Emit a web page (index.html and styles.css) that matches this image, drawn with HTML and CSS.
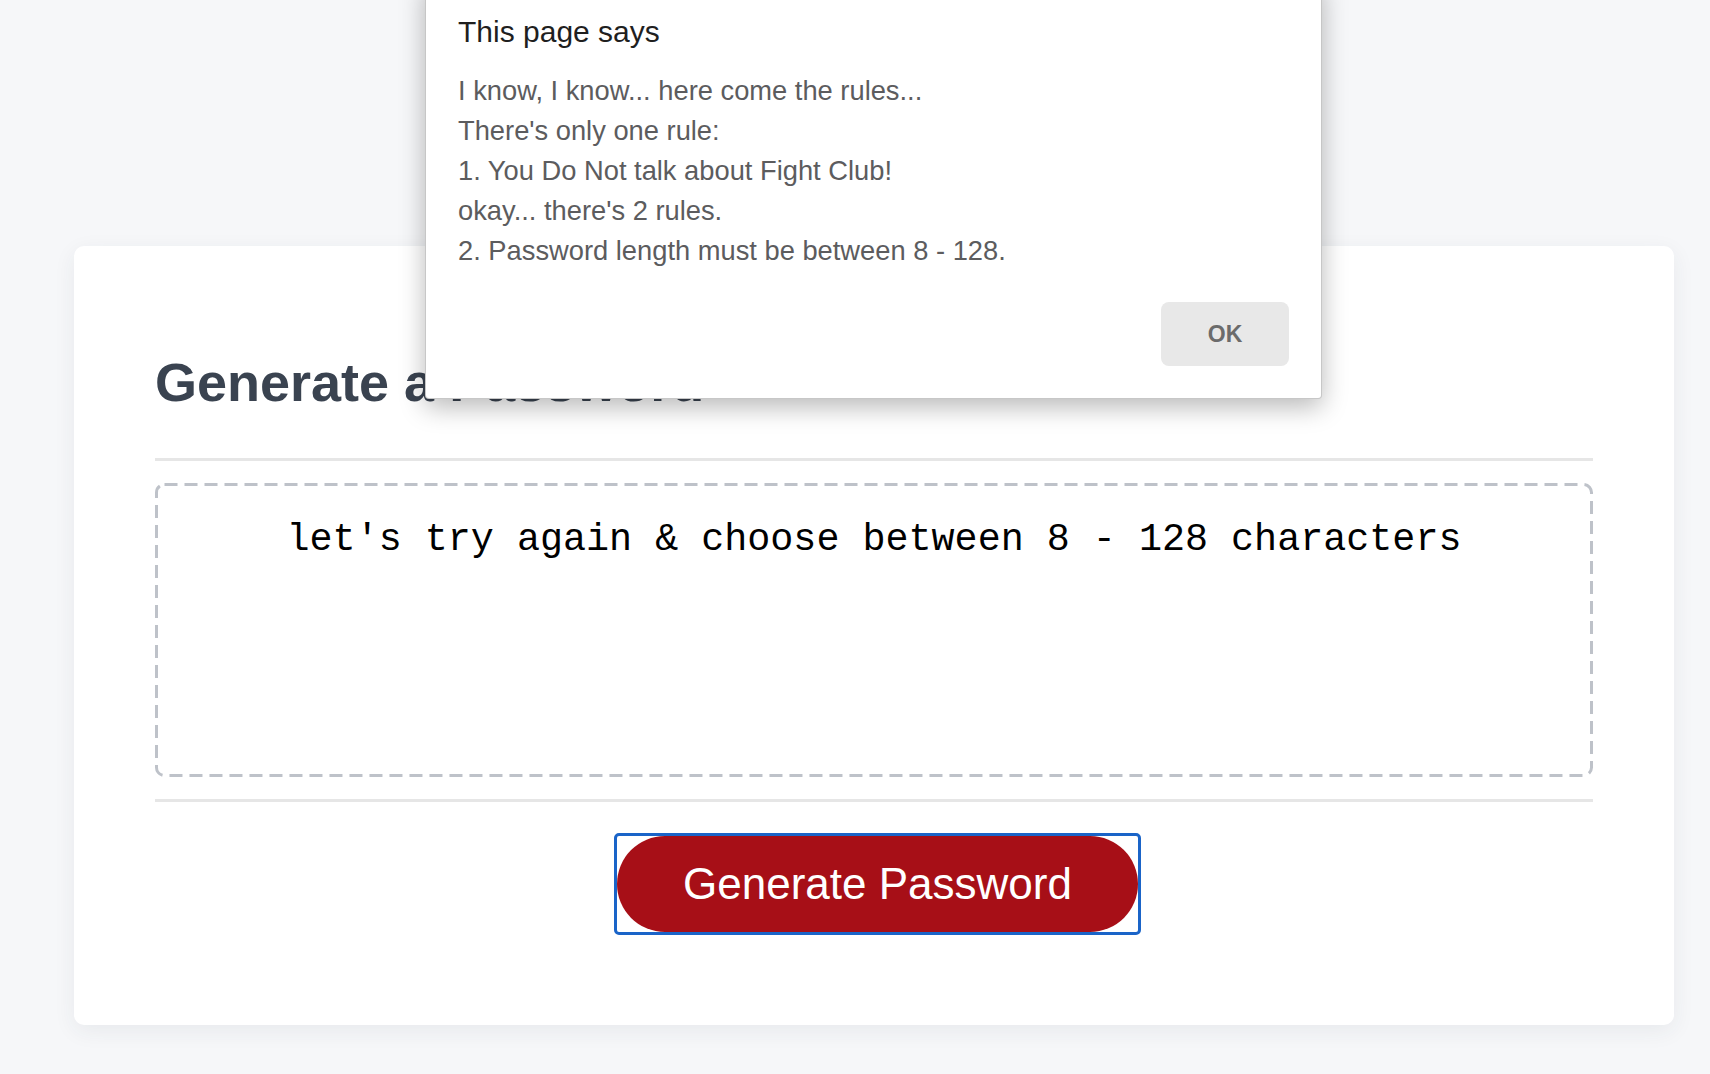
FILE: index.html
```html
<!DOCTYPE html>
<html lang="en">
<head>
<meta charset="utf-8">
<title>Password Generator</title>
<link rel="stylesheet" href="styles.css">
</head>
<body>
<main class="card">
  <h1 class="card-title">Generate a Password</h1>
  <hr class="rule">
  <div class="output-wrap">
    <textarea class="output" readonly>let's try again &amp; choose between 8 - 128 characters</textarea>
    <svg class="output-border" aria-hidden="true"><rect class="output-border-rect"/></svg>
  </div>
  <hr class="rule rule-bottom">
  <button class="generate" type="button"><span class="generate-pill">Generate Password</span></button>
</main>
<div class="dialog" role="alertdialog">
  <div class="dialog-title">This page says</div>
  <div class="dialog-body">
    <p class="dialog-line">I know, I know... here come the rules...</p>
    <p class="dialog-line">There's only one rule:</p>
    <p class="dialog-line">1. You Do Not talk about Fight Club!</p>
    <p class="dialog-line">okay... there's 2 rules.</p>
    <p class="dialog-line">2. Password length must be between 8 - 128.</p>
  </div>
  <div class="dialog-actions"><button class="dialog-ok" type="button">OK</button></div>
</div>
</body>
</html>
```

FILE: styles.css
```css
html, body {
  margin: 0;
  padding: 0;
}
body {
  background: #f6f7f9;
  font-family: "Liberation Sans", Arial, sans-serif;
  overflow: hidden;
  height: 1074px;
  position: relative;
}
.card {
  margin: 246px 0 0 74px;
  width: 1600px;
  height: 779px;
  box-sizing: border-box;
  padding: 103px 81px 90px;
  background: #fff;
  border-radius: 10px;
  box-shadow: 0 6px 22px rgba(40, 50, 70, 0.07);
  display: flex;
  flex-direction: column;
}
.card-title {
  margin: 0;
  font-size: 54px;
  line-height: 66px;
  font-weight: bold;
  color: #3a4350;
}
.rule {
  margin: 43px 0 0;
  height: 3px;
  border: none;
  background: #e6e6e6;
}
.output-wrap {
  position: relative;
  margin: 22px 0 0;
  height: 294px;
}
.output {
  display: block;
  width: 100%;
  height: 100%;
  box-sizing: border-box;
  padding: 36px 23px;
  border: none;
  border-radius: 8px;
  font-family: "Liberation Mono", "Courier New", monospace;
  font-size: 38.4px;
  line-height: 43px;
  color: #000;
  text-align: center;
  resize: none;
  overflow: hidden;
  background: #fff;
  outline: none;
}
.output-border {
  position: absolute;
  inset: 0;
  width: 100%;
  height: 100%;
  pointer-events: none;
  overflow: visible;
}
.output-border-rect {
  x: 1.5px;
  y: 1.5px;
  width: calc(100% - 3px);
  height: calc(100% - 3px);
  rx: 8px;
  ry: 8px;
  fill: none;
  stroke: #bec2c9;
  stroke-width: 3px;
  stroke-dasharray: 13 7;
}
.rule-bottom {
  margin-top: 22px;
}
.generate {
  display: block;
  margin: 31px 0 0 459px;
  width: 527px;
  height: 102px;
  box-sizing: border-box;
  padding: 0;
  border: 3px solid #1a64c8;
  border-radius: 5px;
  background: #fff;
  cursor: pointer;
}
.generate-pill {
  display: flex;
  align-items: center;
  justify-content: center;
  width: 100%;
  height: 100%;
  border-radius: 48px;
  background: #a70f17;
  color: #fff;
  font-family: "Liberation Sans", Arial, sans-serif;
  font-size: 44px;
}
.dialog {
  position: absolute;
  top: -20px;
  left: 425px;
  width: 897px;
  box-sizing: border-box;
  padding: 34px 32px 32px 32px;
  background: #fff;
  border: 1px solid rgba(0, 0, 0, 0.22);
  border-top: none;
  border-radius: 0 0 4px 4px;
  box-shadow: 0 8px 26px rgba(0, 0, 0, 0.28);
}
.dialog-title {
  font-size: 30px;
  line-height: 36px;
  color: #1f1f1f;
}
.dialog-body {
  margin-top: 21px;
}
.dialog-line {
  margin: 0;
  font-size: 27.3px;
  line-height: 40px;
  color: #5c5c5e;
}
.dialog-actions {
  margin-top: 31px;
  display: flex;
  justify-content: flex-end;
}
.dialog-ok {
  width: 128px;
  height: 64px;
  border: none;
  border-radius: 8px;
  background: #e8e8e8;
  color: #6b6b6b;
  font-family: "Liberation Sans", Arial, sans-serif;
  font-size: 23px;
  font-weight: bold;
  padding: 0;
}
```
